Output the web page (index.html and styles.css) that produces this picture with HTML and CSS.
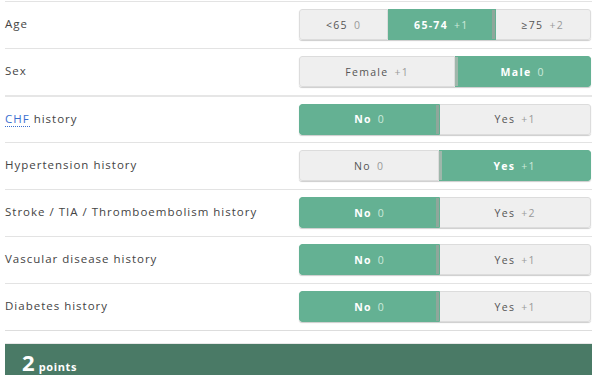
FILE: index.html
```html
<!DOCTYPE html>
<html lang="en">
<head>
  <meta charset="UTF-8">
  <title>CHA2DS2-VASc</title>
  <link rel="stylesheet" href="styles.css">
</head>
<body>
  <div class="calc">
    <div class="row">
      <div class="label">Age</div>
      <div class="group">
        <button class="opt">&lt;65 <span class="pts">0</span></button>
        <button class="opt active">65-74 <span class="pts">+1</span></button>
        <button class="opt">&ge;75 <span class="pts">+2</span></button>
      </div>
    </div>
    <div class="row">
      <div class="label">Sex</div>
      <div class="group">
        <button class="opt">Female <span class="pts">+1</span></button>
        <button class="opt active">Male <span class="pts">0</span></button>
      </div>
    </div>
    <div class="row thick">
      <div class="label"><span class="term">CHF</span> history</div>
      <div class="group">
        <button class="opt active">No <span class="pts">0</span></button>
        <button class="opt">Yes <span class="pts">+1</span></button>
      </div>
    </div>
    <div class="row">
      <div class="label">Hypertension history</div>
      <div class="group">
        <button class="opt">No <span class="pts">0</span></button>
        <button class="opt active">Yes <span class="pts">+1</span></button>
      </div>
    </div>
    <div class="row">
      <div class="label">Stroke / TIA / Thromboembolism history</div>
      <div class="group">
        <button class="opt active">No <span class="pts">0</span></button>
        <button class="opt">Yes <span class="pts">+2</span></button>
      </div>
    </div>
    <div class="row">
      <div class="label">Vascular disease history</div>
      <div class="group">
        <button class="opt active">No <span class="pts">0</span></button>
        <button class="opt">Yes <span class="pts">+1</span></button>
      </div>
    </div>
    <div class="row last">
      <div class="label">Diabetes history</div>
      <div class="group">
        <button class="opt active">No <span class="pts">0</span></button>
        <button class="opt">Yes <span class="pts">+1</span></button>
      </div>
    </div>
    <div class="result">
      <span class="score">2</span> <span class="unit">points</span>
    </div>
  </div>
</body>
</html>
```
FILE: styles.css
```css
body {
  margin: 0;
  font-family: "Open Sans", "DejaVu Sans", sans-serif;
  background: #ffffff;
  color: #444444;
}

.calc {
  padding: 1px 0 0 5px;
}

.row {
  display: flex;
  align-items: center;
  justify-content: space-between;
  height: 46px;
  border-top: 1px solid #e3e3e3;
  padding-right: 1px;
}

.row.thick {
  border-top: 2px solid #e6e6e6;
  height: 45px;
}

.row.last {
  border-bottom: 1px solid #dddddd;
}

.label {
  font-size: 11.5px;
  letter-spacing: 1px;
  color: #444444;
  margin-top: -3px;
}

.term {
  color: #3a6fd0;
  border-bottom: 1px dotted #3a6fd0;
}

.group {
  display: flex;
  width: 292px;
  height: 31px;
  margin-top: -1px;
  border-radius: 3px;
  overflow: hidden;
  box-shadow: 0 1px 1px rgba(0, 0, 0, 0.2);
}

.opt {
  flex: 1 1 auto;
  border: 1px solid #dcdcdc;
  border-left-width: 0;
  background: #efefef;
  color: #555555;
  font-family: inherit;
  font-size: 10.5px;
  letter-spacing: 1.3px;
  padding: 0 10px;
  cursor: pointer;
}

.opt:first-child {
  border-left-width: 1px;
  border-radius: 3px 0 0 3px;
}

.opt:last-child {
  border-radius: 0 3px 3px 0;
}

.opt .pts {
  color: #9a9a9a;
  margin-left: 2px;
}

.opt.active {
  background: #64b193;
  border-color: #64b193;
  color: #ffffff;
  font-weight: bold;
  box-shadow: inset -3px 0 0 #8fa79b;
}

.opt.active:last-child {
  box-shadow: inset 3px 0 0 #9fb7ab;
}

.opt.active .pts {
  color: #cdeadb;
  font-weight: normal;
}

.result {
  margin-top: 12px;
  height: 40px;
  background: #4a7a66;
  color: #ffffff;
  padding: 3px 0 0 17px;
  box-sizing: border-box;
  border-top: 1px solid #e8e8e8;
}

.score {
  font-size: 22px;
  font-weight: bold;
}

.unit {
  font-size: 11px;
  font-weight: bold;
  letter-spacing: 0.6px;
}
```
